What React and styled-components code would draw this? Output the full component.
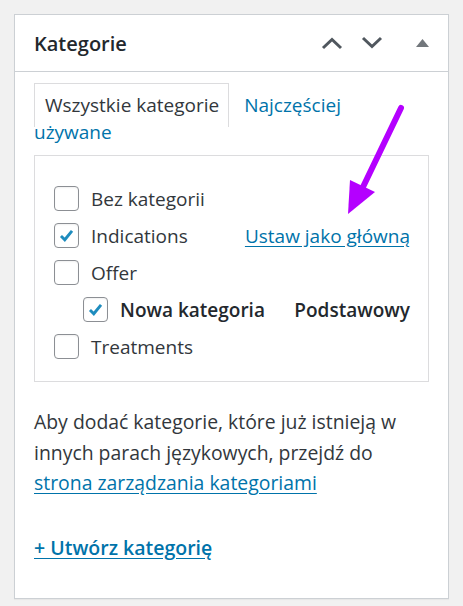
import React from 'react'
import styled, { createGlobalStyle } from 'styled-components'

const GlobalStyle = createGlobalStyle`
  html, body {
    margin: 0;
    padding: 0;
    background: #f1f1f1;
  }
  body {
    font-family: "Open Sans", "Noto Sans", "Liberation Sans", sans-serif;
    color: #32373c;
  }
`

const Page = styled.div`
  padding: 14px 14px 9px;
`

const Panel = styled.div`
  position: relative;
  width: 433px;
  background: #fff;
  border: 1px solid #ccd0d4;
  box-shadow: 0 1px 1px rgba(0, 0, 0, 0.04);
`

const Header = styled.div`
  display: flex;
  align-items: center;
  height: 56px;
  padding: 0 9px 0 19px;
  border-bottom: 1px solid #ccd0d4;
`

const Title = styled.h2`
  flex: 1;
  margin: 0;
  font-size: 20px;
  font-weight: 600;
  color: #23282d;
`

const HeaderButton = styled.button`
  display: flex;
  align-items: center;
  justify-content: center;
  width: ${p => p.$w || 40}px;
  height: 36px;
  margin-left: ${p => p.$gap || 0}px;
  padding: 0;
  border: 0;
  background: none;
  color: ${p => p.$light ? '#72777c' : '#50575e'};
`

const Body = styled.div`
  padding: 0 19px 35px;
`

const TabBar = styled.div`
  margin-top: 20px;
  padding-right: 40px;
  font-size: 19px;
  line-height: 27px;
`

const ActiveTab = styled.span`
  padding: 8px 9px 9px 10px;
  border: 1px solid #dcdcde;
  border-bottom: 0;
  background: #fff;
  color: #32373c;
`

const TabLink = styled.a`
  margin-left: 15px;
  color: #0073aa;
  text-decoration: none;
`

const ListBox = styled.div`
  margin-top: 9px;
  padding: 24px 18px 16px 19px;
  border: 1px solid #dcdcde;
`

const Row = styled.div`
  display: flex;
  align-items: center;
  height: 37px;
  padding-left: ${p => p.$indent ? 29 : 0}px;
`

const Label = styled.label`
  flex: 1;
  display: flex;
  align-items: center;
  gap: 12px;
  font-size: 19px;
  font-weight: ${p => p.$bold ? 600 : 400};
  color: ${p => p.$bold ? '#23282d' : '#32373c'};
`

const Box = styled.span`
  display: flex;
  align-items: center;
  justify-content: center;
  flex: none;
  width: 23px;
  height: 23px;
  border: 1px solid #8c8f94;
  border-radius: 4px;
  background: #fff;
  box-shadow: inset 0 1px 2px rgba(0, 0, 0, 0.06);
`

const SideLink = styled.a`
  font-size: 19px;
  color: #0073aa;
  text-decoration: underline;
  text-underline-offset: 3px;
`

const SideText = styled.span`
  font-size: 19px;
  font-weight: 600;
  color: #23282d;
`

const Note = styled.p`
  margin: 25px 0 0;
  font-size: 19.4px;
  line-height: 30.5px;
  color: #32373c;
`

const NoteLink = styled.a`
  color: #0073aa;
  text-decoration: underline;
  text-underline-offset: 3px;
`

const AddLink = styled.a`
  display: inline-block;
  margin-top: 34px;
  font-size: 19.5px;
  font-weight: 600;
  line-height: 30px;
  color: #0073aa;
  text-decoration: underline;
  text-underline-offset: 3px;
`

const Arrow = styled.svg`
  position: absolute;
  left: 306px;
  top: 76px;
`

const Checkbox = ({ checked }) => (
  <Box>
    {checked && (
      <svg width="17" height="17" viewBox="0 0 20 20">
        <path d="M3.5 10.5 L8 15 L16.5 4.5" fill="none" stroke="#1e8cbe" strokeWidth="3.4" strokeLinejoin="miter" />
      </svg>
    )}
  </Box>
)

const categories = [
  { name: 'Bez kategorii' },
  { name: 'Indications', checked: true, link: 'Ustaw jako główną' },
  { name: 'Offer' },
  { name: 'Nowa kategoria', checked: true, child: true, primary: 'Podstawowy' },
  { name: 'Treatments' }
]

export default function App() {
  return (
    <>
      <GlobalStyle />
      <Page>
        <Panel>
          <Header>
            <Title>Kategorie</Title>
            <HeaderButton>
              <svg width="22" height="14" viewBox="0 0 22 14">
                <path d="M2 12 L11 3.5 L20 12" fill="none" stroke="currentColor" strokeWidth="3" />
              </svg>
            </HeaderButton>
            <HeaderButton>
              <svg width="22" height="14" viewBox="0 0 22 14">
                <path d="M2 2 L11 10.5 L20 2" fill="none" stroke="currentColor" strokeWidth="3" />
              </svg>
            </HeaderButton>
            <HeaderButton $w={34} $gap={13} $light>
              <svg width="13" height="8" viewBox="0 0 13 8">
                <path d="M6.5 0 L13 8 L0 8 Z" fill="currentColor" />
              </svg>
            </HeaderButton>
          </Header>
          <Body>
            <TabBar>
              <ActiveTab>Wszystkie kategorie</ActiveTab>
              <TabLink href="#">Najczęściej używane</TabLink>
            </TabBar>
            <ListBox>
              {categories.map(c => (
                <Row key={c.name} $indent={c.child}>
                  <Label $bold={c.child}>
                    <Checkbox checked={c.checked} />
                    {c.name}
                  </Label>
                  {c.link && <SideLink href="#">{c.link}</SideLink>}
                  {c.primary && <SideText>{c.primary}</SideText>}
                </Row>
              ))}
            </ListBox>
            <Note>
              Aby dodać kategorie, które już istnieją w innych parach językowych, przejdź do{' '}
              <NoteLink href="#">strona zarządzania kategoriami</NoteLink>
            </Note>
            <AddLink href="#">+ Utwórz kategorię</AddLink>
          </Body>
          <Arrow width="100" height="130" viewBox="0 0 100 130">
            <line x1="80" y1="17" x2="42" y2="96" stroke="#b400ff" strokeWidth="6" strokeLinecap="round" />
            <path d="M27 123 L29 89 L54 101 Z" fill="#b400ff" />
          </Arrow>
        </Panel>
      </Page>
    </>
  )
}
